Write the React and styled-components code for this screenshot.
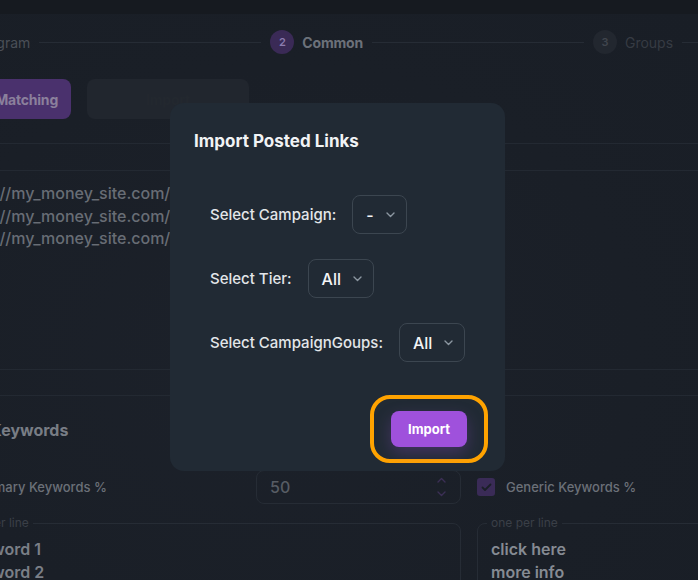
import React from 'react';
import styled, { createGlobalStyle } from 'styled-components';

const GlobalStyle = createGlobalStyle`
  html, body {
    margin: 0;
    padding: 0;
    background: #161a20;
    overflow: hidden;
  }
  body {
    font-family: Inter, "Noto Sans", "Liberation Sans", Arial, sans-serif;
  }
  * {
    box-sizing: border-box;
  }
`;

const Screen = styled.div`
  position: relative;
  width: 698px;
  height: 580px;
  overflow: hidden;
  padding-top: 14px;
`;

const Panel = styled.div`
  height: 566px;
  background: radial-gradient(ellipse at 40% 60%, #1c212a 0%, #1a1f27 60%, #191e26 100%);
  overflow: hidden;
`;

// the page is wider than the window, it starts left of the viewport
const Shell = styled.div`
  margin-left: -80px;
  width: 1150px;
`;

const Stepper = styled.div`
  display: flex;
  align-items: center;
  height: 24px;
  margin-top: 16px;
  padding-left: 23px;
`;

const Step = styled.div`
  display: flex;
  align-items: center;
  gap: 8px;
  flex-shrink: 0;
`;

const StepDot = styled.span`
  width: 24px;
  height: 24px;
  border-radius: 50%;
  display: flex;
  align-items: center;
  justify-content: center;
  font-size: 11px;
  font-weight: 600;
  background: ${(p) => (p.$active ? '#3a2a56' : '#22272f')};
  color: ${(p) => (p.$active ? '#8c7cb0' : '#40454d')};
`;

const StepLabel = styled.span`
  font-size: 14px;
  font-weight: ${(p) => (p.$active ? 700 : 400)};
  letter-spacing: ${(p) => (p.$active ? '-0.2px' : '0')};
  color: ${(p) => (p.$active ? '#6c717a' : p.$done ? '#4a4f57' : '#363b43')};
`;

const Connector = styled.span`
  width: ${(p) => p.$w}px;
  height: 1px;
  margin: 0 9px;
  background: #262c35;
  flex-shrink: 0;
`;

const ButtonBar = styled.div`
  display: flex;
  gap: 16px;
  margin-top: 25px;
  padding-bottom: 24px;
  border-bottom: 1px solid #232932;
`;

const TabButton = styled.button`
  width: ${(p) => p.$w}px;
  height: 40px;
  border: none;
  border-radius: 8px;
  font-family: inherit;
  font-size: 14px;
  font-weight: 700;
  letter-spacing: -0.2px;
  background: ${(p) => (p.$active ? '#4a316d' : '#21262e')};
  color: ${(p) => (p.$active ? '#8b809c' : '#23282f')};
`;

const Band = styled.div`
  height: ${(p) => p.$h}px;
  border-bottom: 1px solid #232932;
`;

const UrlArea = styled.div`
  height: 199px;
  padding: 11px 0 0 36px;
  border-bottom: 1px solid #232932;
`;

const UrlLine = styled.div`
  font-size: 16px;
  line-height: 22.5px;
  font-weight: 500;
  color: #686d75;
`;

const Lower = styled.div`
  padding: 23px 0 0 28px;
`;

const Heading = styled.h3`
  margin: 0;
  font-size: 16px;
  line-height: 22px;
  font-weight: 700;
  color: #787d85;
`;

const Columns = styled.div`
  display: grid;
  grid-template-columns: 513px 513px;
  column-gap: 16px;
  margin-top: 29px;
`;

const Column = styled.div`
  display: flex;
  flex-direction: column;
  gap: 12px;
`;

const OptionRow = styled.div`
  display: grid;
  grid-template-columns: 1fr 205px;
  column-gap: 16px;
  align-items: center;
  height: 34px;
`;

const CheckLabel = styled.label`
  display: flex;
  align-items: center;
  gap: 11px;
  font-size: 13px;
  font-weight: 500;
  color: #6b7078;
`;

const CheckBox = styled.span`
  width: 18px;
  height: 18px;
  border-radius: 3px;
  background: #3a2b57;
  display: flex;
  align-items: center;
  justify-content: center;
`;

const NumberBox = styled.div`
  height: 34px;
  border: 1px solid #262c35;
  border-radius: 8px;
  display: flex;
  align-items: center;
  justify-content: space-between;
  padding: 0 14px 0 13px;
  font-size: 16px;
  font-weight: 500;
  color: #575c64;
`;

const Spinner = styled.span`
  display: flex;
  flex-direction: column;
  gap: 8px;
`;

const Field = styled.fieldset`
  margin: 0;
  height: 120px;
  padding: 8px 13px;
  border: 1px solid #262c35;
  border-radius: 8px;
`;

const Legend = styled.legend`
  margin-left: -4px;
  padding: 0 4px;
  font-size: 12px;
  line-height: 14px;
  color: #3a3f47;
`;

const FieldLine = styled.div`
  font-size: 16px;
  line-height: 23px;
  font-weight: 600;
  color: ${(p) => (p.$bright ? '#868b93' : '#7a7f87')};
`;

const Modal = styled.div`
  position: absolute;
  left: 170px;
  top: 103px;
  width: 335px;
  height: 368px;
  padding: 27px 17px 8px 24px;
  border-radius: 14px;
  background: #212a34;
  display: flex;
  flex-direction: column;
`;

const ModalTitle = styled.h2`
  margin: 0;
  font-size: 17px;
  line-height: 22px;
  font-weight: 700;
  color: #f1f3f5;
`;

const Form = styled.div`
  display: flex;
  flex-direction: column;
  gap: 25px;
  margin-top: 43px;
  padding-left: 16px;
`;

const FormRow = styled.div`
  display: flex;
  align-items: center;
  gap: 16px;
`;

const FormLabel = styled.span`
  font-size: 15px;
  font-weight: 500;
  color: #e3e6e9;
`;

const Select = styled.div`
  height: 39px;
  display: inline-flex;
  align-items: center;
  gap: 12px;
  padding: 0 11px 0 13px;
  border: 1px solid #3c4650;
  border-radius: 8px;
  font-size: 16px;
  font-weight: 500;
  color: #f3f4f6;
`;

const Footer = styled.div`
  display: flex;
  justify-content: flex-end;
  margin-top: 33px;
`;

const FocusRing = styled.div`
  padding: 12px 17px;
  border: 4px solid #ffa300;
  border-radius: 20px;
`;

const PrimaryButton = styled.button`
  width: 76px;
  height: 36px;
  border: none;
  border-radius: 8px;
  background: #9f51dc;
  color: #ffffff;
  font-family: inherit;
  font-size: 13px;
  font-weight: 700;
  box-shadow: 0 6px 16px rgba(150, 80, 210, 0.28);
`;

const Chevron = ({ up, color = '#8c97a1' }) => (
  <svg width="9" height="6" viewBox="0 0 9 6" fill="none">
    <path
      d={up ? 'M1 5L4.5 1.5L8 5' : 'M1 1L4.5 4.5L8 1'}
      stroke={color}
      strokeWidth="1.4"
      strokeLinecap="round"
      strokeLinejoin="round"
    />
  </svg>
);

const Tick = () => (
  <svg width="11" height="9" viewBox="0 0 11 9" fill="none">
    <path d="M1.5 4.5L4 7L9.5 1.5" stroke="#1a1f27" strokeWidth="1.8" strokeLinecap="round" strokeLinejoin="round" />
  </svg>
);

const urls = [
  'https://my_money_site.com/money-page',
  'https://my_money_site.com/contact',
  'https://my_money_site.com/blog',
];

const selects = [
  { label: 'Select Campaign:', value: '-' },
  { label: 'Select Tier:', value: 'All' },
  { label: 'Select CampaignGoups:', value: 'All' },
];

const keywordColumns = [
  { label: 'Primary Keywords %', lines: ['Keyword 1', 'Keyword 2'], bright: false },
  { label: 'Generic Keywords %', lines: ['click here', 'more info'], bright: true },
];

const App = () => {
  return (
    <>
      <GlobalStyle />
      <Screen>
        <Panel>
          <Shell>
            <Stepper>
              <Step>
                <StepDot>1</StepDot>
                <StepLabel $done>Diagram</StepLabel>
              </Step>
              <Connector $w={222} />
              <Step>
                <StepDot $active>2</StepDot>
                <StepLabel $active>Common</StepLabel>
              </Step>
              <Connector $w={212} />
              <Step>
                <StepDot>3</StepDot>
                <StepLabel>Groups</StepLabel>
              </Step>
              <Connector $w={200} />
            </Stepper>

            <ButtonBar>
              <TabButton $active $w={151}>Keyword Matching</TabButton>
              <TabButton $w={162}>Import</TabButton>
            </ButtonBar>

            <Band $h={27} />

            <UrlArea>
              {urls.map((url) => (
                <UrlLine key={url}>{url}</UrlLine>
              ))}
            </UrlArea>

            <Band $h={26} />

            <Lower>
              <Heading>Main Keywords</Heading>
              <Columns>
                {keywordColumns.map((col) => (
                  <Column key={col.label}>
                    <OptionRow>
                      <CheckLabel>
                        <CheckBox>
                          <Tick />
                        </CheckBox>
                        {col.label}
                      </CheckLabel>
                      <NumberBox>
                        50
                        <Spinner>
                          <Chevron up color="#3b2f55" />
                          <Chevron color="#3b2f55" />
                        </Spinner>
                      </NumberBox>
                    </OptionRow>
                    <Field>
                      <Legend>one per line</Legend>
                      {col.lines.map((line) => (
                        <FieldLine key={line} $bright={col.bright}>{line}</FieldLine>
                      ))}
                    </Field>
                  </Column>
                ))}
              </Columns>
            </Lower>
          </Shell>
        </Panel>

        <Modal>
          <ModalTitle>Import Posted Links</ModalTitle>
          <Form>
            {selects.map((s) => (
              <FormRow key={s.label}>
                <FormLabel>{s.label}</FormLabel>
                <Select>
                  {s.value}
                  <Chevron />
                </Select>
              </FormRow>
            ))}
          </Form>
          <Footer>
            <FocusRing>
              <PrimaryButton>Import</PrimaryButton>
            </FocusRing>
          </Footer>
        </Modal>
      </Screen>
    </>
  );
};

export default App;
